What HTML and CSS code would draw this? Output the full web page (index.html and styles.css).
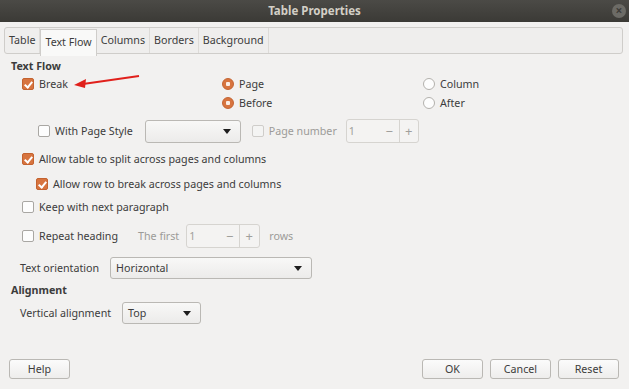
FILE: index.html
```html
<!DOCTYPE html>
<html>
<head lang="en">
    <meta charset="UTF-8">
    <title>Table Properties</title>
    <link rel="stylesheet" href="styles.css">
</head>
<body>
<div class="dialog">
    <div class="titlebar">
        Table Properties
        <span class="close">&times;</span>
    </div>

    <div class="tabs">
        <div class="tab">Table</div>
        <div class="tab active">Text Flow</div>
        <div class="tab">Columns</div>
        <div class="tab">Borders</div>
        <div class="tab">Background</div>
    </div>

    <div class="page">
        <div class="heading">Text Flow</div>

        <div class="grid_break">
            <div class="row"><span class="cb on"></span>Break</div>
            <div class="row"><span class="rb on"></span>Page</div>
            <div class="row"><span class="rb"></span>Column</div>
            <div class="row"></div>
            <div class="row"><span class="rb on"></span>Before</div>
            <div class="row"><span class="rb"></span>After</div>
        </div>

        <div class="row row_style">
            <span class="cb"></span>With Page Style
            <div class="combo combo_style"></div>
            <span class="cb off"></span><span class="dim">Page number</span>
            <div class="spin spin_page">
                <span class="spin_val">1</span>
                <span class="spin_btn">&minus;</span>
                <span class="spin_btn">+</span>
            </div>
        </div>

        <div class="row row_split"><span class="cb on"></span>Allow table to split across pages and columns</div>
        <div class="row row_rowbreak"><span class="cb on"></span>Allow row to break across pages and columns</div>
        <div class="row row_keep"><span class="cb"></span>Keep with next paragraph</div>

        <div class="row row_repeat">
            <span class="cb"></span>Repeat heading
            <span class="dim first">The first</span>
            <div class="spin spin_rows">
                <span class="spin_val">1</span>
                <span class="spin_btn">&minus;</span>
                <span class="spin_btn">+</span>
            </div>
            <span class="dim rows">rows</span>
        </div>

        <div class="row row_orient">
            <span class="label">Text orientation</span>
            <div class="combo combo_orient">Horizontal</div>
        </div>

        <div class="heading heading_align">Alignment</div>

        <div class="row row_valign">
            <span class="label">Vertical alignment</span>
            <div class="combo combo_valign">Top</div>
        </div>
    </div>

    <div class="buttons">
        <div class="btn btn_help">Help</div>
        <div class="spacer"></div>
        <div class="btn">OK</div>
        <div class="btn">Cancel</div>
        <div class="btn">Reset</div>
    </div>

    <svg class="arrow" width="70" height="16" viewBox="0 0 70 16">
        <line x1="66" y1="2" x2="10" y2="10" stroke="#e0201b" stroke-width="2"/>
        <polygon points="1,11 13,5 12,14" fill="#e0201b"/>
    </svg>
</div>
</body>
</html>
```

FILE: styles.css
```css
* {
    margin: 0;
    padding: 0;
    box-sizing: border-box;
}
body {
    background-color: #f2f1f0;
    font-family: "Noto Sans", "DejaVu Sans", sans-serif;
    font-size: 10.7px;
    color: #3c3c3c;
}
.dialog {
    position: relative;
    width: 629px;
    height: 389px;
    background-color: #f2f1f0;
}

/* title bar */
.titlebar {
    height: 22px;
    line-height: 22px;
    background: linear-gradient(#4b4a46, #3b3a36);
    color: #d3cfc6;
    text-align: center;
    font-weight: bold;
    font-size: 11.5px;
    position: relative;
}
.close {
    position: absolute;
    right: 3px;
    top: 4px;
    width: 14px;
    height: 14px;
    border-radius: 50%;
    background-color: #6c6b66;
    color: #3e3d39;
    font-size: 12px;
    line-height: 13px;
    text-align: center;
    font-weight: bold;
}

/* tabs */
.tabs {
    display: flex;
    margin: 5px 6px 0 4px;
    height: 27px;
    border: 1px solid #cfcdca;
    border-radius: 3px;
    background-color: #efeeed;
}
.tab {
    padding: 0 4px;
    line-height: 25px;
    border-right: 1px solid #dddbd8;
    color: #3c3c3c;
}
.tab.active {
    background-color: #f9f9f8;
    border: 1px solid #cfcdca;
    border-bottom: none;
    margin-top: 1px;
    line-height: 24px;
    height: 27px;
}

/* content */
.page {
    padding-left: 11px;
}
.heading {
    font-weight: bold;
    height: 14px;
    line-height: 14px;
    margin-top: 5px;
}
.row {
    display: flex;
    align-items: center;
    height: 18px;
    white-space: nowrap;
}
.grid_break {
    display: grid;
    grid-template-columns: 200px 201px auto;
    row-gap: 1px;
    margin-left: 11px;
    margin-top: 2px;
}

.cb {
    display: inline-block;
    width: 12px;
    height: 12px;
    border: 1px solid #a9a7a3;
    border-radius: 2px;
    background-color: #fdfdfd;
    margin-right: 5px;
    position: relative;
}
.cb.on {
    background-color: #d7743f;
    border-color: #c4622f;
}
.cb.on::after {
    content: "";
    position: absolute;
    left: 3px;
    top: 1px;
    width: 3px;
    height: 6px;
    border: solid #fff;
    border-width: 0 2px 2px 0;
    transform: rotate(40deg);
}
.cb.off {
    border-color: #cfcdca;
    background-color: #f4f4f3;
}
.rb {
    display: inline-block;
    width: 12px;
    height: 12px;
    border: 1px solid #b3b1ad;
    border-radius: 50%;
    background-color: #fdfdfd;
    margin-right: 5px;
}
.rb.on {
    background: radial-gradient(circle, #fbeee6 0 2px, #d7743f 2.5px);
    border-color: #c4622f;
}
.dim {
    color: #9c9b98;
}

.row_style {
    height: 24px;
    margin-top: 7px;
    margin-left: 27px;
}
.combo {
    height: 22px;
    border: 1px solid #bab8b4;
    border-radius: 3px;
    background: linear-gradient(#f8f8f7, #ecebea);
    line-height: 20px;
    padding-left: 5px;
    position: relative;
}
.combo::after {
    content: "";
    position: absolute;
    right: 9px;
    top: 8px;
    border: 4px solid transparent;
    border-top: 5px solid #1e1e1e;
}
.combo_style {
    width: 96px;
    height: 23px;
    margin: 0 11px 0 12px;
}
.spin {
    display: flex;
    height: 24px;
    border: 1px solid #d6d4d0;
    border-radius: 3px;
    background-color: #f4f3f2;
    color: #a09f9c;
    line-height: 22px;
}
.spin_val {
    width: 33px;
    padding-left: 2px;
}
.spin_btn {
    width: 19px;
    text-align: center;
    font-size: 13px;
}
.spin_btn + .spin_btn {
    border-left: 1px solid #d6d4d0;
}
.spin_page {
    width: 73px;
    margin-left: 9px;
}

.row_split {
    margin-top: 7px;
    margin-left: 11px;
}
.row_rowbreak {
    margin-top: 7px;
    margin-left: 25px;
}
.row_keep {
    margin-top: 5px;
    margin-left: 11px;
}
.row_repeat {
    height: 24px;
    margin-top: 8px;
    margin-left: 11px;
}
.first {
    margin-left: 20px;
}
.spin_rows {
    width: 74px;
    margin-left: 7px;
}
.rows {
    margin-left: 9px;
}

.row_orient {
    height: 22px;
    margin-top: 9px;
    margin-left: 9px;
}
.label {
    margin-right: 10px;
}
.combo_orient {
    width: 202px;
    margin-left: 1px;
}
.heading_align {
    margin-top: 4px;
}
.row_valign {
    height: 22px;
    margin-top: 5px;
    margin-left: 9px;
}
.combo_valign {
    width: 79px;
    margin-left: 1px;
}

/* footer buttons */
.buttons {
    display: flex;
    gap: 7px;
    margin: 35px 10px 0 9px;
}
.spacer {
    flex: 1;
}
.btn {
    width: 61px;
    height: 20px;
    line-height: 18px;
    text-align: center;
    border: 1px solid #bab8b4;
    border-radius: 3px;
    background: linear-gradient(#fbfbfb, #eeedec);
}

/* annotation arrow */
.arrow {
    position: absolute;
    left: 73px;
    top: 74px;
}
```
